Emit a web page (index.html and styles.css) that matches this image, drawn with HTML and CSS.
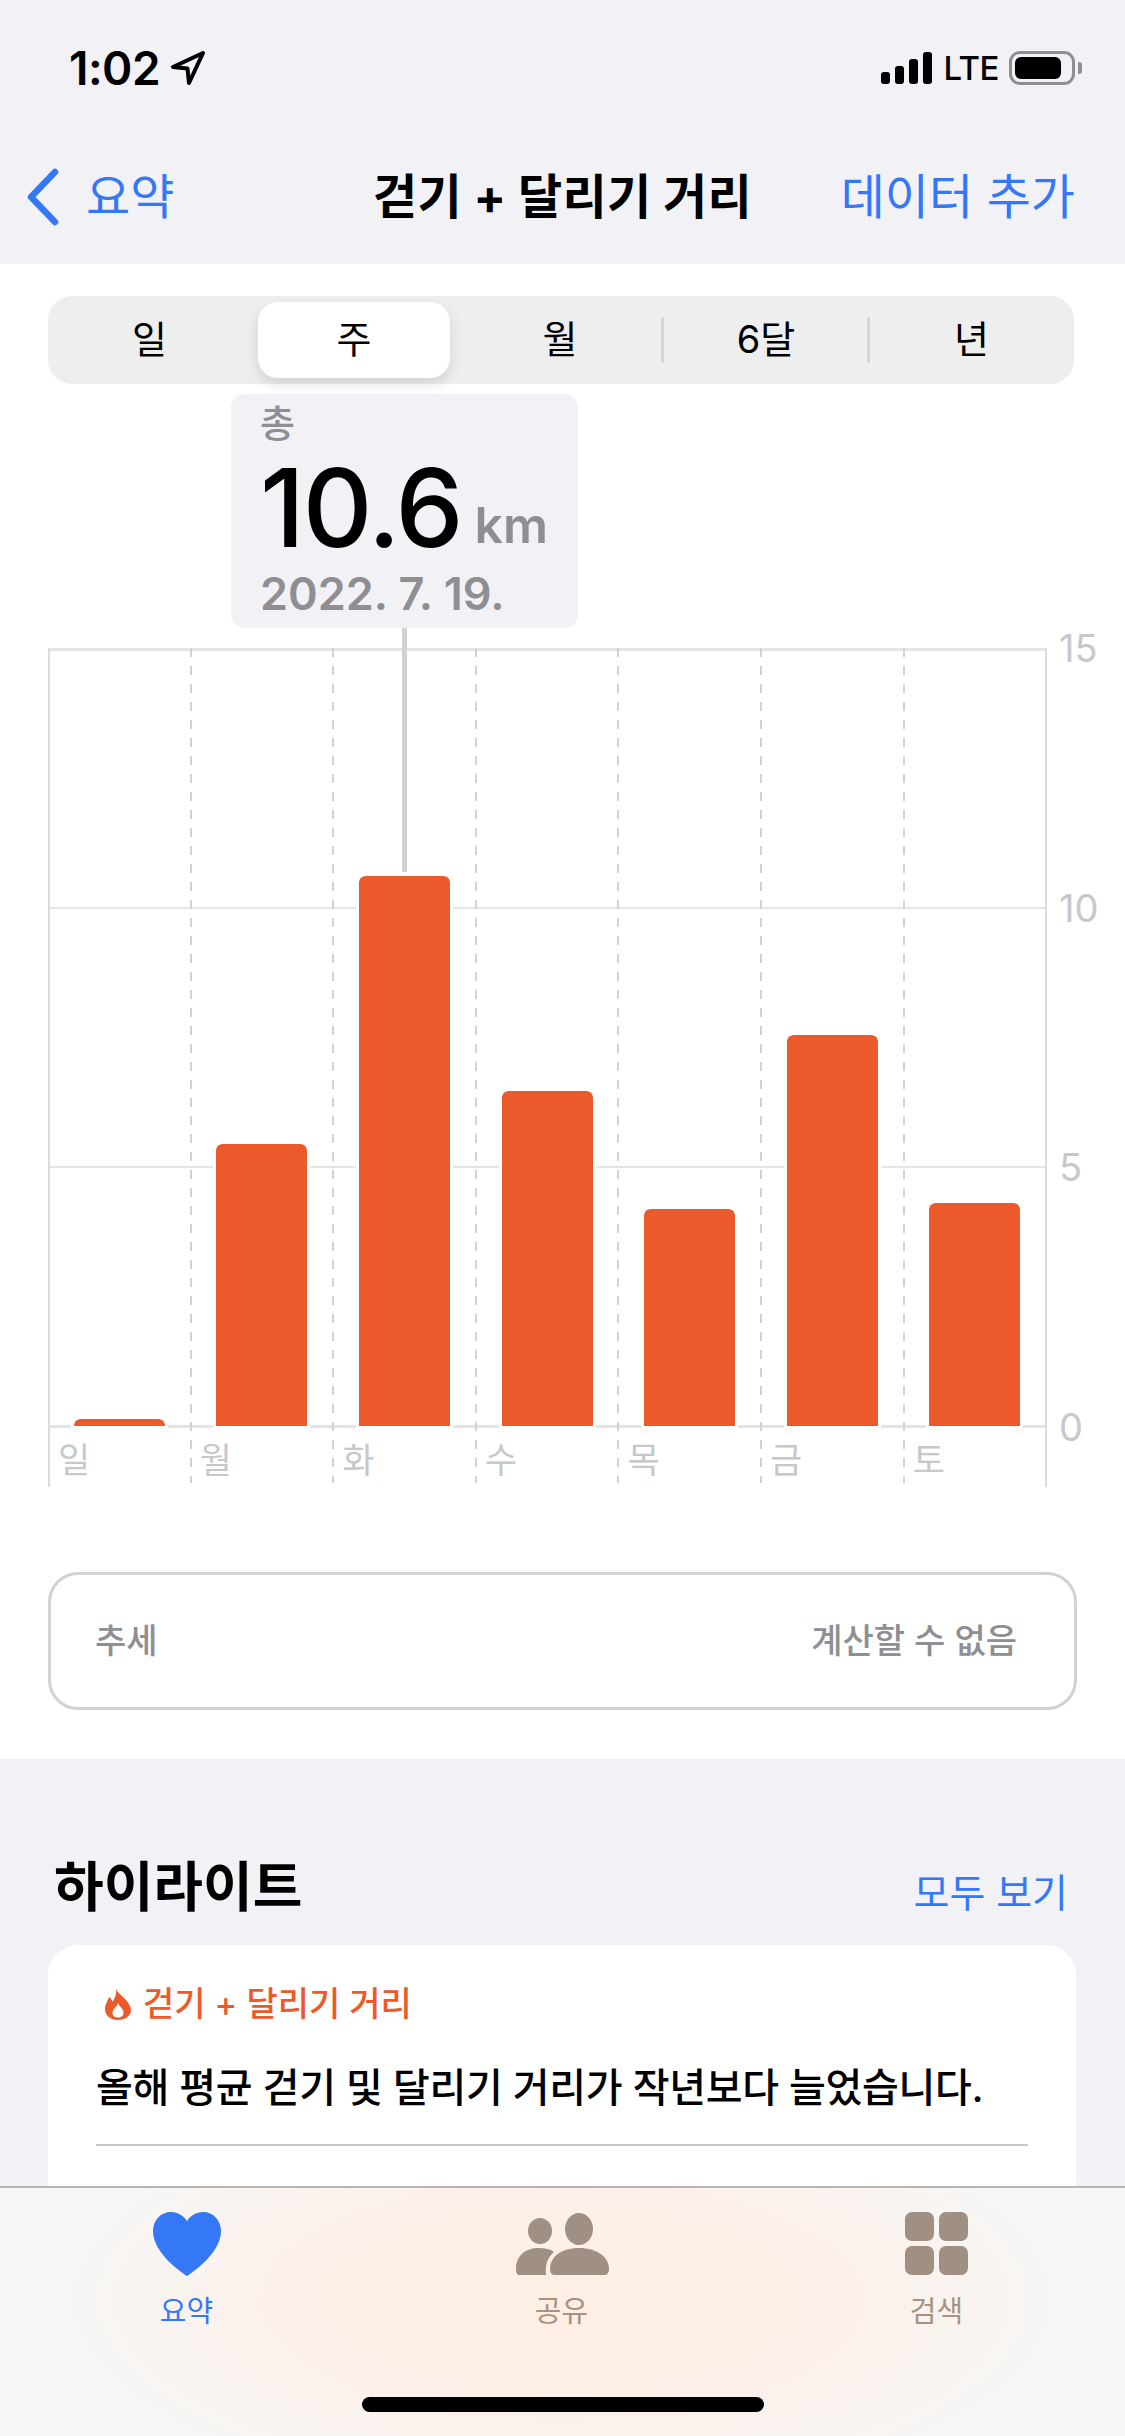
FILE: index.html
```html
<!DOCTYPE html>
<html lang="ko">
<head>
<meta charset="UTF-8">
<meta name="viewport" content="width=device-width, initial-scale=1.0">
<title>걷기 + 달리기 거리</title>
<link rel="stylesheet" href="styles.css">
</head>
<body>
<header class="top">
  <div class="status">
    <div class="status-left">
      <span class="time">1:02</span>
      <svg class="arrow" width="36" height="36" viewBox="0 0 36 36"><path d="M33 3 L3 17 L17.500 18.500 L19 33 Z" fill="none" stroke="#000" stroke-width="4" stroke-linejoin="round"/></svg>
    </div>
    <div class="status-right">
      <div class="signal"><i class="s1"></i><i class="s2"></i><i class="s3"></i><i class="s4"></i></div>
      <span class="lte">LTE</span>
      <div class="battery"><div class="battery-fill"></div></div>
      <div class="battery-nub"></div>
    </div>
  </div>
  <nav class="nav">
    <a class="back">
      <svg width="34" height="58" viewBox="0 0 34 58"><path d="M29 4 L5 29 L29 54" fill="none" stroke="#3478f6" stroke-width="6.500" stroke-linecap="round" stroke-linejoin="round"/></svg>
      <span>요약</span>
    </a>
    <h1 class="title">걷기 + 달리기 거리</h1>
    <a class="add">데이터 추가</a>
  </nav>
</header>

<main class="panel">
  <div class="segments">
    <div class="seg">일</div>
    <div class="seg selected">주</div>
    <div class="seg sep">월</div>
    <div class="seg sep">6달</div>
    <div class="seg">년</div>
  </div>

  <div class="tooltip">
    <div class="tip-label">총</div>
    <div class="tip-value">10.6<span class="tip-unit">km</span></div>
    <div class="tip-date">2022. 7. 19.</div>
  </div>

  <div class="chart">
    <div class="days">
      <div class="gridlines"><div></div><div></div><div></div></div>
      <div class="day"><div class="plot"><div class="bar" style="height: 0.9%"></div></div><div class="day-label">일</div></div>
      <div class="day"><div class="plot"><div class="bar" style="height: 36.2%"></div></div><div class="day-label">월</div></div>
      <div class="day"><div class="plot"><div class="bar" style="height: 70.7%"><div class="guide"></div></div></div><div class="day-label">화</div></div>
      <div class="day"><div class="plot"><div class="bar" style="height: 43%"></div></div><div class="day-label">수</div></div>
      <div class="day"><div class="plot"><div class="bar" style="height: 27.9%"></div></div><div class="day-label">목</div></div>
      <div class="day"><div class="plot"><div class="bar" style="height: 50.3%"></div></div><div class="day-label">금</div></div>
      <div class="day"><div class="plot"><div class="bar" style="height: 28.7%"></div></div><div class="day-label">토</div></div>
    </div>
    <div class="y-axis">
      <span>15</span><span>10</span><span>5</span><span>0</span>
    </div>
  </div>

  <div class="trend">
    <span>추세</span>
    <span>계산할 수 없음</span>
  </div>
</main>

<section class="highlights">
  <div class="hl-head">
    <h2>하이라이트</h2>
    <a>모두 보기</a>
  </div>
  <div class="hl-card">
    <div class="hl-tag">
      <svg width="26" height="32" viewBox="0 0 26 32"><path fill-rule="evenodd" d="M11 0 C12 5 17 7 21 12 C24 16 26 19 26 22 C26 28 20 32 13 32 C6 32 0 28 0 21 C0 16 3 13 4 9 C6 10 7 12 7.500 14 C10 10 12 5 11 0 Z M13 15 C12 19 7.500 21 7.500 25 C7.500 28 10 29.500 13 29.500 C16 29.500 18.500 28 18.500 25 C18.500 21 15 19 13 15 Z" fill="#ec5a2b"/></svg>
      <span>걷기 + 달리기 거리</span>
    </div>
    <p class="hl-text">올해 평균 걷기 및 달리기 거리가 작년보다 늘었습니다.</p>
    <div class="hl-rule"></div>
  </div>
</section>

<footer class="tabbar">
  <div class="tab active">
    <svg width="68" height="64" viewBox="0 0 68 64"><path d="M34 64 C31 62 0 42 0 19 C0 8 8 0 18 0 C25 0 31 4 34 9 C37 4 43 0 50 0 C60 0 68 8 68 19 C68 42 37 62 34 64 Z" fill="#3478f6"/></svg>
    <span>요약</span>
  </div>
  <div class="tab">
    <svg width="94" height="64" viewBox="0 0 94 64">
      <ellipse cx="25" cy="19" rx="12" ry="13" fill="#a08f83"/>
      <ellipse cx="64" cy="17" rx="14" ry="16" fill="#a08f83"/>
      <path d="M1 57 C1 44 10 36 24 36 C30 36 35 37 39 40 C33 45 30 52 31 63 L5 63 C2 63 1 61 1 57 Z" fill="#a08f83"/>
      <path d="M35 57 C35 45 46 36 64 36 C82 36 94 45 94 57 C94 61 92 63 89 63 L40 63 C37 63 35 61 35 57 Z" fill="#a08f83"/>
    </svg>
    <span>공유</span>
  </div>
  <div class="tab">
    <svg width="64" height="64" viewBox="0 0 64 64">
      <rect x="0" y="0" width="29" height="29" rx="7" fill="#a08f83"/>
      <rect x="34" y="0" width="29" height="29" rx="7" fill="#a08f83"/>
      <rect x="0" y="34" width="29" height="29" rx="7" fill="#a08f83"/>
      <rect x="34" y="34" width="29" height="29" rx="7" fill="#a08f83"/>
    </svg>
    <span>검색</span>
  </div>
  <div class="home-bar"></div>
</footer>
</body>
</html>
```

FILE: styles.css
```css
* {
  box-sizing: border-box;
}
html, body {
  margin: 0;
  padding: 0;
}
body {
  position: relative;
  width: 1125px;
  height: 2436px;
  overflow: hidden;
  background-color: #f1f1f6;
  color: #000;
  font-family: Inter, "Noto Sans CJK KR", sans-serif;
}

/* top bar */
.top {
  height: 264px;
  background-color: #f1f1f6;
}
.status {
  display: flex;
  justify-content: space-between;
  align-items: center;
  height: 136px;
  padding: 0 43px 0 69px;
  margin-bottom: 31px;
}
.status-left {
  display: flex;
  align-items: center;
  gap: 10px;
}
.time {
  font-size: 46px;
  font-weight: 600;
  line-height: 52px;
  letter-spacing: -0.500px;
}
.status-right {
  display: flex;
  align-items: center;
}
.signal {
  display: flex;
  align-items: flex-end;
  gap: 5px;
  height: 32px;
}
.signal i {
  display: block;
  width: 9px;
  background-color: #000;
  border-radius: 3px;
}
.s1 { height: 12px; }
.s2 { height: 18px; }
.s3 { height: 25px; }
.s4 { height: 32px; }
.lte {
  margin-left: 12px;
  font-size: 33px;
  font-weight: 500;
  line-height: 40px;
  letter-spacing: -0.500px;
}
.battery {
  width: 66px;
  height: 34px;
  margin-left: 10px;
  padding: 3px;
  border: 3px solid #8e8e93;
  border-radius: 11px;
}
.battery-fill {
  width: 46px;
  height: 22px;
  background-color: #000;
  border-radius: 6px;
}
.battery-nub {
  width: 4px;
  height: 12px;
  margin-left: 3px;
  background-color: #8e8e93;
  border-radius: 0 3px 3px 0;
}
.nav {
  display: grid;
  grid-template-columns: 1fr auto 1fr;
  align-items: center;
  height: 60px;
  padding: 0 26px;
}
.back {
  display: flex;
  align-items: center;
  gap: 26px;
  color: #3478f6;
  font-size: 48px;
  line-height: 60px;
}
.title {
  margin: 0;
  font-size: 48px;
  font-weight: 700;
  line-height: 60px;
  letter-spacing: 0.300px;
}
.add {
  justify-self: end;
  margin-right: 24px;
  color: #3478f6;
  font-size: 48px;
  line-height: 60px;
}

/* white panel */
.panel {
  height: 1495px;
  padding: 32px 0 0 48px;
  background-color: #fff;
}
.segments {
  display: grid;
  grid-template-columns: 203px repeat(3, 206px) 205px;
  width: 1026px;
  height: 88px;
  background-color: #eeeeef;
  border-radius: 24px;
}
.seg {
  position: relative;
  margin: 6px 7px;
  font-size: 38px;
  line-height: 74px;
  text-align: center;
}
.seg.selected {
  background-color: #fff;
  border-radius: 20px;
  box-shadow: 0 6px 14px rgba(0, 0, 0, 0.12);
}
.seg.sep::after {
  content: "";
  position: absolute;
  top: 15px;
  bottom: 15px;
  right: -8px;
  width: 3px;
  background-color: #d6d6d8;
}
.tooltip {
  width: 347px;
  height: 234px;
  margin: 10px 0 20px 183px;
  padding: 6px 0 0 29px;
  background-color: #f1f1f6;
  border-radius: 14px;
}
.tip-label {
  color: #8e8e93;
  font-size: 38px;
  font-weight: 500;
  line-height: 46px;
}
.tip-value {
  margin-top: 17px;
  font-size: 108px;
  font-weight: 500;
  line-height: 90px;
  letter-spacing: -2px;
  white-space: nowrap;
}
.tip-unit {
  margin-left: 13px;
  color: #8e8e93;
  font-size: 50px;
  font-weight: 600;
  letter-spacing: 0;
  vertical-align: 4px;
}
.tip-date {
  color: #8e8e93;
  font-size: 45px;
  font-weight: 600;
  line-height: 48px;
  white-space: nowrap;
}

/* chart */
.chart {
  display: flex;
  height: 839px;
}
.days {
  position: relative;
  flex: none;
  display: grid;
  grid-template-columns: 141.700px repeat(6, 142.600px);
  width: 999px;
  border-right: 2px solid #dcdcdf;
}
.gridlines {
  position: absolute;
  top: 0;
  left: 0;
  right: 0;
  display: grid;
  grid-template-rows: repeat(3, 1fr);
  height: 780px;
  border-bottom: 3px solid #e3e3e6;
}
.gridlines div {
  border-top: 2px solid #e6e6e9;
}
.gridlines div:first-child {
  border-top-width: 3px;
}
.day {
  position: relative;
  background-image: linear-gradient(#d1d1d6 50%, transparent 50%);
  background-repeat: repeat-y;
  background-size: 2px 18px;
  margin-bottom: 4px;
}
.day:nth-child(2) {
  margin-bottom: 0;
  background-image: linear-gradient(#dcdcdf, #dcdcdf);
}
.plot {
  display: flex;
  justify-content: center;
  align-items: flex-end;
  height: 778px;
  padding-left: 2px;
}
.bar {
  position: relative;
  width: 91px;
  background-color: #ec5a2b;
  border-radius: 6px 6px 0 0;
  outline: 3px solid #fff;
}
.guide {
  position: absolute;
  bottom: calc(100% + 4px);
  left: 43px;
  width: 5px;
  height: 244px;
  background-color: #d1d1d6;
}
.day-label {
  padding: 12px 0 0 10px;
  color: #c7c7cc;
  font-size: 35px;
  line-height: 44px;
}
.y-axis {
  flex: none;
  display: grid;
  grid-template-rows: repeat(3, 259.500px) auto;
  margin: -22px 0 0 12px;
  color: #c7c7cc;
  font-size: 38px;
  line-height: 44px;
}
.trend {
  display: flex;
  justify-content: space-between;
  align-items: center;
  width: 1029px;
  height: 138px;
  margin-top: 85px;
  padding: 0 57px 6px 44px;
  color: #8e8e93;
  font-size: 34px;
  font-weight: 500;
  border: 3px solid #d1d1d6;
  border-radius: 30px;
}

/* highlights */
.highlights {
  padding: 0 49px 0 48px;
}
.hl-head {
  display: flex;
  justify-content: space-between;
  align-items: flex-end;
  height: 186px;
  padding: 0 8px 22px 6px;
}
.hl-head h2 {
  margin: 0;
  font-size: 54px;
  font-weight: 700;
  line-height: 70px;
}
.hl-head a {
  margin-bottom: 2px;
  color: #3478f6;
  font-size: 39px;
  line-height: 56px;
}
.hl-card {
  height: 400px;
  padding: 39px 48px 0;
  background-color: #fff;
  border-radius: 30px 30px 0 0;
}
.hl-tag {
  display: flex;
  align-items: center;
  gap: 12px;
  margin-left: 9px;
  color: #ec5a2b;
  font-size: 34px;
  font-weight: 500;
  line-height: 40px;
}
.hl-text {
  margin: 39px 0 0;
  font-size: 40px;
  font-weight: 500;
  line-height: 50px;
  letter-spacing: -0.300px;
  white-space: nowrap;
}
.hl-rule {
  height: 2px;
  margin-top: 31px;
  background-color: #c6c6c8;
}

/* tab bar, lies over the page */
.tabbar {
  position: absolute;
  left: 0;
  right: 0;
  bottom: 0;
  display: grid;
  grid-template-columns: repeat(3, 375px);
  height: 250px;
  padding-top: 24px;
  border-top: 2px solid #b6b6b6;
  background-color: #f7f6f5;
  background-image: radial-gradient(ellipse 500px 200px at 50% 45%, #feeee4 0%, #fbf1ea 60%, rgba(247, 246, 245, 0) 100%);
}
.tab {
  display: flex;
  flex-direction: column;
  align-items: center;
  padding-right: 2px;
  color: #a89284;
  font-size: 29px;
  line-height: 36px;
}
.tab svg {
  display: block;
  margin-bottom: 18px;
}
.tab.active {
  color: #3478f6;
}
.home-bar {
  position: absolute;
  left: 362px;
  bottom: 24px;
  width: 402px;
  height: 15px;
  background-color: #000;
  border-radius: 8px;
}
```
